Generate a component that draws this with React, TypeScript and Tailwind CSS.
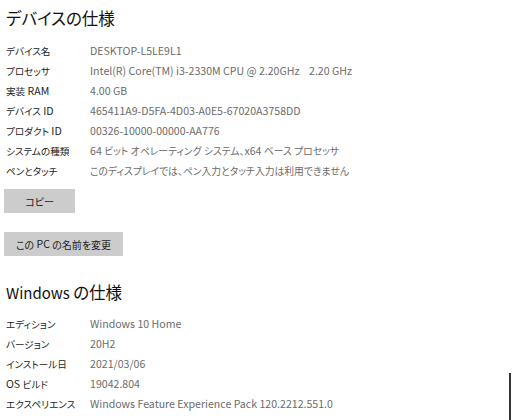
import React from "react";

const font = "font-['Noto_Sans_CJK_JP','Noto_Sans',sans-serif] [font-feature-settings:'palt']";

const device: [string, string][] = [
  ["デバイス名", "DESKTOP-L5LE9L1"],
  ["プロセッサ", "Intel(R) Core(TM) i3-2330M CPU @ 2.20GHz    2.20 GHz"],
  ["実装 RAM", "4.00 GB"],
  ["デバイス ID", "465411A9-D5FA-4D03-A0E5-67020A3758DD"],
  ["プロダクト ID", "00326-10000-00000-AA776"],
  ["システムの種類", "64 ビット オペレーティング システム、x64 ベース プロセッサ"],
  ["ペンとタッチ", "このディスプレイでは、ペン入力とタッチ入力は利用できません"],
];

const win: [string, string][] = [
  ["エディション", "Windows 10 Home"],
  ["バージョン", "20H2"],
  ["インストール日", "2021/03/06"],
  ["OS ビルド", "19042.804"],
  ["エクスペリエンス", "Windows Feature Experience Pack 120.2212.551.0"],
];

const CJK = /([\u3000-\u30ff\u4e00-\u9fff\uff00-\uffef]+)/;

function Mixed({ text, cjk }: { text: string; cjk: string }) {
  const parts = text.split(CJK);
  return (
    <>
      {parts.map((p, i) =>
        CJK.test(p) ? (
          <span key={i} className={cjk}>
            {p}
          </span>
        ) : (
          <span key={i}>{p}</span>
        )
      )}
    </>
  );
}

function Row({ k, v }: { k: string; v: string }) {
  return (
    <div className="flex h-5 items-center text-[10.6px]">
      <div className="w-[84px] shrink-0 whitespace-pre text-[#1c1c1c]">
        <Mixed text={k} cjk="text-[9.6px]" />
      </div>
      <div className="whitespace-pre text-[#6b6b6b]">
        <Mixed text={v} cjk="text-[9.8px]" />
      </div>
    </div>
  );
}

export default function App() {
  return (
    <div className={`relative w-[512px] h-[420px] overflow-hidden bg-white pl-[6px] pt-1 ${font}`}>
      <div className="h-7 leading-7 whitespace-pre text-[16px] text-[#111]">
        <Mixed text="デバイスの仕様" cjk="text-[16.5px]" />
      </div>
      <div className="mt-[9px] flex flex-col">
        {device.map(([k, v]) => (
          <Row key={k} k={k} v={v} />
        ))}
      </div>
      <div className="mt-2 -ml-[2px] flex h-6 w-[71px] items-center justify-center bg-[#cccccc] text-[10px] text-[#1c1c1c]">
        コピー
      </div>
      <div className="mt-[19px] -ml-[2px] flex h-6 w-[119px] items-center justify-center whitespace-pre bg-[#cccccc] text-[10.5px] text-[#1c1c1c]">
        <Mixed text="この PC の名前を変更" cjk="text-[10px]" />
      </div>
      <div className="mt-[22px] h-7 leading-7 whitespace-pre text-[15px] text-[#111]">
        <Mixed text="Windows の仕様" cjk="text-[16.5px]" />
      </div>
      <div className="mt-2 flex flex-col">
        {win.map(([k, v]) => (
          <Row key={k} k={k} v={v} />
        ))}
      </div>
      <div className="absolute left-[509px] top-[373px] h-[47px] w-[2px] bg-[#333]" />
    </div>
  );
}
